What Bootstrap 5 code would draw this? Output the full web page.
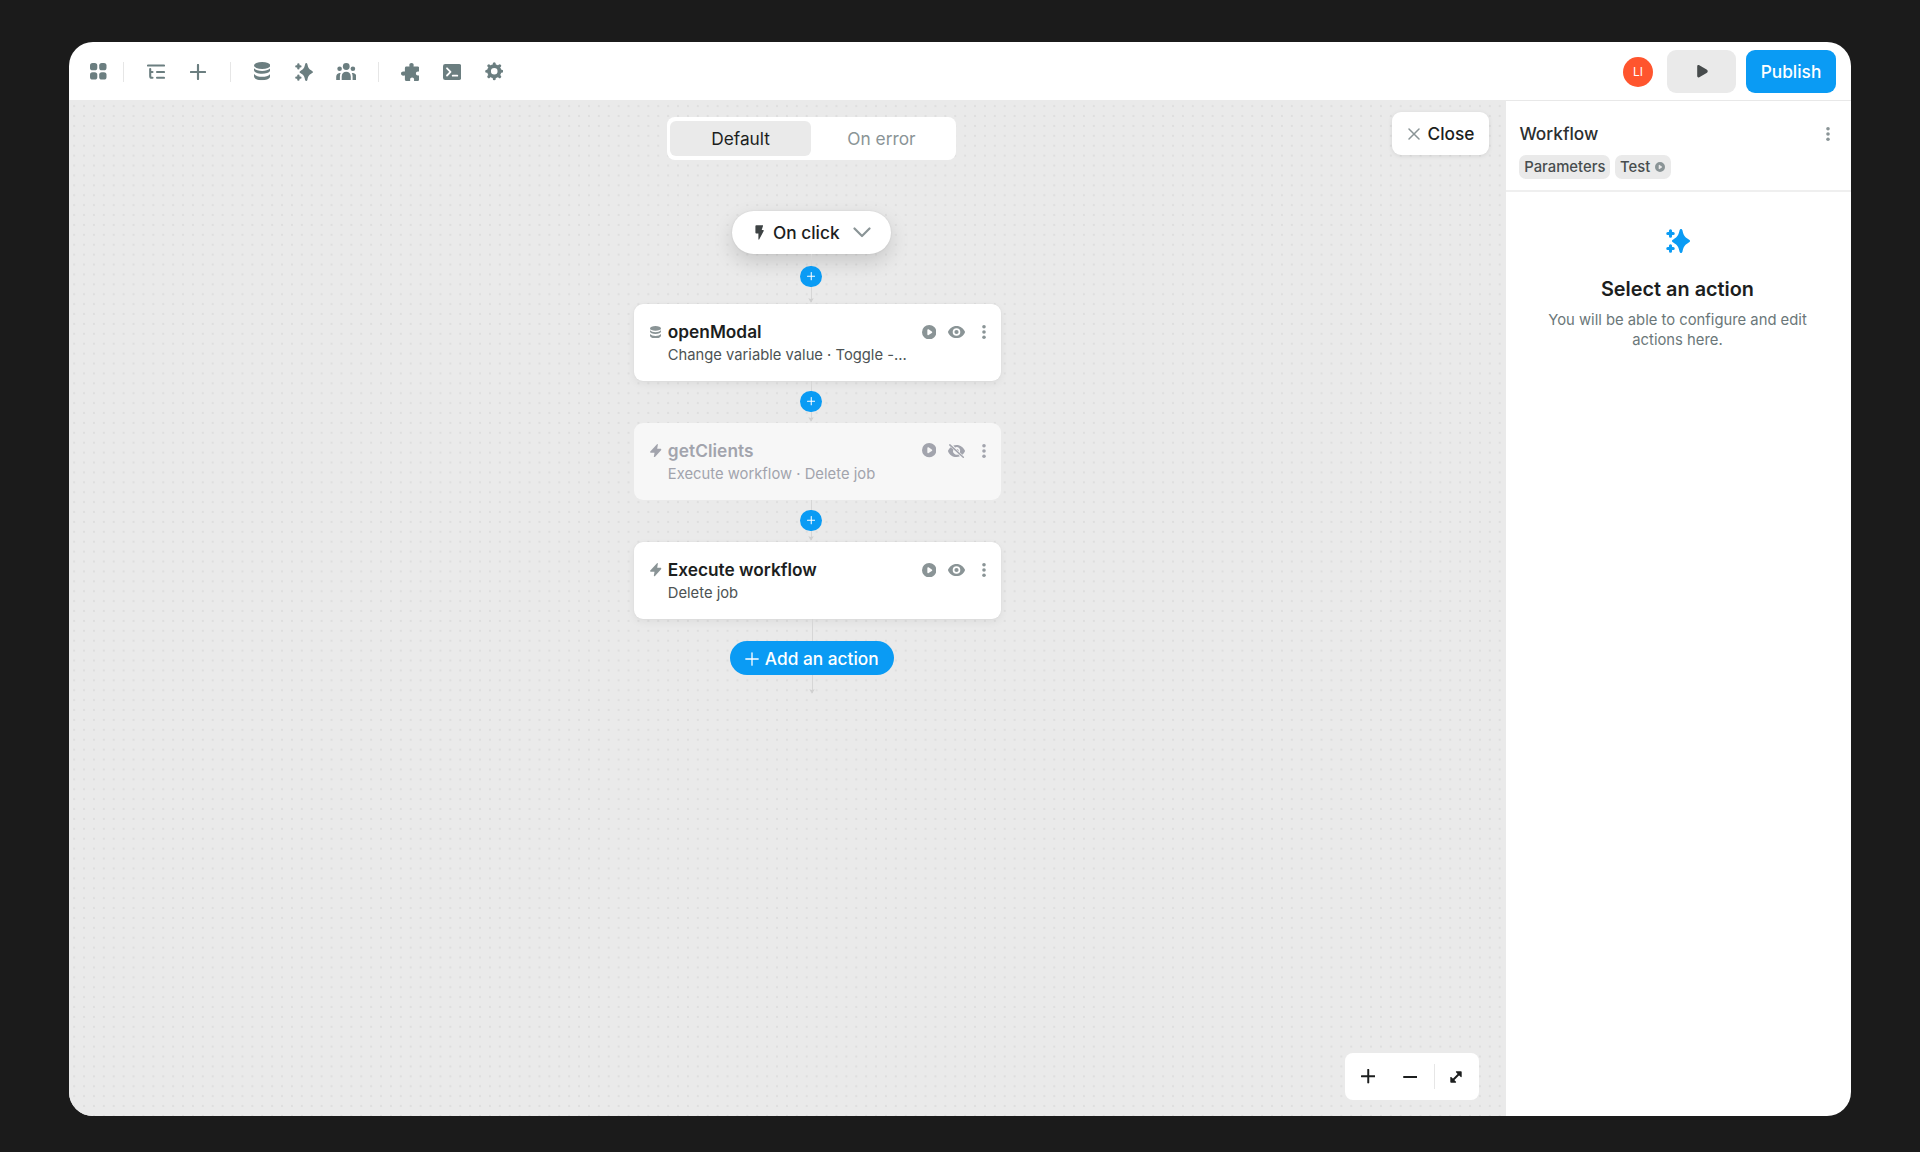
<!DOCTYPE html>
<html lang="en">
<head>
<meta charset="utf-8">
<meta name="viewport" content="width=device-width, initial-scale=1">
<title>Workflow editor</title>
<link href="https://cdn.jsdelivr.net/npm/bootstrap@5.3.0/dist/css/bootstrap.min.css" rel="stylesheet">
<style>
:root { --ink:#1c1e1e; --slate:#6b7e80; --grey:#8a9496; --blue:#0a9bf4; --canvas:#eaeaea; }
html, body { height:100%; }
body { background:#1b1b1b; font-family:Inter, "Liberation Sans", sans-serif; font-size:17.3px; font-weight:500; line-height:22px; color:var(--ink); padding:42px 69px 36px; overflow:hidden; }
svg { display:block; flex:none; fill:currentColor; }
.ln { fill:none; stroke:currentColor; stroke-linecap:round; stroke-linejoin:round; }
.app-window { height:1074px; border-radius:24px; background:#fff; }
.topbar { height:58px; padding:1px 15px 0 8.500px; color:var(--slate); }
.tool { width:42px; height:42px; border:0; background:none; padding:0; color:inherit; }
.sep { width:1px; height:20px; background:#e6e6e6; }
.sep-a { margin:0 10.700px 0 3.500px; }
.sep-b { margin:0 10.2px 0 11px; }
.avatar { width:30px; height:30px; background:#ff552e; color:#fff; font-size:12px; font-weight:400; margin-right:14px; }
.btn { --bs-btn-font-weight:500; --bs-btn-font-size:17.3px; --bs-btn-line-height:22px; --bs-btn-padding-x:0; --bs-btn-padding-y:0; --bs-btn-border-radius:9px; border:0; }
.btn-run { width:69px; height:42.5px; background:var(--canvas); color:#474b4c; margin-right:10px; padding-left:2px; }
.btn-publish { width:90px; height:42.5px; background:var(--blue); color:#fff; }
.workspace { width:1437px; background:var(--canvas); }
.grid-dots { position:absolute; inset:0; width:100%; height:100%; }
.flow { width:354px; margin-left:565px; padding-top:17.3px; }
.tabs { width:289px; height:42.4px; background:#fff; border-radius:8px; padding:3.6px; }
.tabs button { border:0; background:none; border-radius:6px; color:var(--grey); flex:1; padding:1px 0 0; }
.tabs button.active { background:var(--canvas); color:var(--ink); }
.trigger { width:159px; height:43px; margin-top:51.3px; border-radius:22px; background:#fff; box-shadow:0 0 2px rgba(0,0,0,.1), 0 8px 20px rgba(0,0,0,.15); padding:1px 20px 0 23px; }
.trigger-label { margin-left:9.500px; }
.link-line { width:1px; background:#d6d6d6; }
.joint { width:21.4px; height:21.4px; background:var(--blue); color:#fff; }
.tip { color:#d0d0d0; margin-top:-4px; }
.step { width:367px; height:77px; border-radius:9px; background:#fff; box-shadow:0 0 2px rgba(0,0,0,.06), 0 3px 8px rgba(0,0,0,.06); padding:17px 3.600px 0 16px; }
.step h2 { font-size:17.3px; font-weight:600; line-height:22px; margin:0; }
.step p { font-size:14.75px; font-weight:400; line-height:20px; margin:2.500px 0 0; color:#4d5354; white-space:pre; }
.step-icon { width:17.8px; height:22px; color:var(--grey); }
.step-act { width:27.3px; height:22px; color:var(--grey); }
.step.off { background:#f7f7f7; box-shadow:none; padding-top:16.500px; }
.step.off p { margin-top:2px; letter-spacing:.02px; }
.step.off h2 { letter-spacing:.07px; }
.step.off h2, .step.off p, .step.off .step-icon, .step.off .step-act { color:#a2a4ad; }
.add { width:164.5px; height:34.5px; border-radius:18px; background:var(--blue); color:#fff; margin-left:2px; gap:5.500px; padding-top:1px; }
.tail { margin-left:2px; }
.close-btn { position:absolute; right:17.5px; top:12.4px; width:96.5px; height:42.3px; background:#fff; color:var(--ink); box-shadow:0 1px 5px rgba(0,0,0,.09); gap:7.500px; padding-left:2px; }
.zoomer { position:absolute; right:27.3px; bottom:16px; width:133.5px; height:47px; background:#fff; border-radius:8px; padding:0 2px; }
.side { width:345px; border-top:1px solid #e8e8e8; }
.side-head { height:91px; padding:22px 13.400px 0; border-bottom:2px solid #efefef; }
.tag { height:24.4px; border-radius:7px; background:var(--canvas); font-size:14.85px; line-height:20px; color:#474d4e; padding:0 4.8px; }
.tag-run { margin-left:5px; gap:5px; padding-right:5.500px; }
.hint { padding:37px 2px 0 0; }
.hint h1 { font-size:19.85px; font-weight:600; line-height:26px; margin:23px 0 0; }
.hint p { font-size:14.8px; font-weight:400; line-height:20px; color:#6b7779; margin:8px 0 0; padding:0 36px; }
</style>
</head>
<body>
<svg width="0" height="0" class="position-absolute">
  <symbol id="i-db" viewBox="0 0 16 18"><ellipse cx="8" cy="3.4" rx="8" ry="3.4"/><path d="M0 6.2c1.6 1.9 4.6 2.7 8 2.7s6.400-.8 8-2.700v1.700c0 2.200-3.600 3.700-8 3.700s-8-1.500-8-3.700zM0 11.700c1.600 1.900 4.600 2.900 8 2.900s6.400-1 8-2.900v2.200C16 16.400 12.400 18 8 18s-8-1.600-8-4.100z"/></symbol>
  <symbol id="i-spark" viewBox="0 0 24 24"><path d="M15 0c.8 0 1.300.6 1.500 1.500.9 4.200 1.800 6.200 5.900 8.700 1 .6 1.600 1.100 1.600 1.800s-.6 1.200-1.600 1.800c-4.100 2.500-5 4.500-5.900 8.700-.2.900-.7 1.500-1.500 1.500s-1.300-.6-1.500-1.500c-.9-4.200-1.800-6.200-5.900-8.700C6.600 13.200 6 12.700 6 12s.6-1.200 1.600-1.800c4.100-2.500 5-4.500 5.900-8.700.2-.9.700-1.500 1.500-1.500z"/><path class="ln" stroke-width="3.100" d="M4.500 1.800v5.400M1.800 4.500h5.400M4.500 16.800v5.400M1.800 19.500h5.400"/></symbol>
  <symbol id="i-bolt" viewBox="0 0 12 14"><path d="M7.300.2C7.900-.2 8.300.200 8.200.8L7.500 5h3.700c.8 0 1 .7.600 1.200L5 13.700c-.5.500-1.100.200-1-.5L4.700 9H.9C.100 9-.2 8.300.300 7.800z"/></symbol>
  <symbol id="i-play" viewBox="0 0 14 14"><path fill-rule="evenodd" d="M7 0a7 7 0 1 1 0 14A7 7 0 0 1 7 0zM5.200 4.900v4.200c0 .8.600 1.100 1.200.700l3.100-2.100c.6-.4.600-1 0-1.400L6.400 4.200c-.6-.4-1.200-.1-1.200.7z"/></symbol>
  <symbol id="i-eye" viewBox="0 0 17 12"><path fill-rule="evenodd" d="M8.500 0C12.600 0 15.500 2.500 16.900 5.600c.1.300.1.500 0 .8C15.500 9.500 12.600 12 8.500 12S1.500 9.500.1 6.400c-.1-.3-.1-.5 0-.8C1.500 2.500 4.400 0 8.500 0zm0 2.200a3.800 3.800 0 1 0 0 7.600 3.800 3.800 0 0 0 0-7.600z"/><circle cx="8.500" cy="6" r="2.100"/></symbol>
  <symbol id="i-eyeoff" viewBox="0 0 17 14"><path d="M5.300 1.600C6.300 1.200 7.300 1 8.500 1c4.100 0 7 2.500 8.400 5.600.1.300.1.500 0 .8-.6 1.300-1.400 2.400-2.500 3.300L11.900 8.600a3.800 3.800 0 0 0-4.800-5.200zM2.700 3.200l2.600 2.200a3.800 3.800 0 0 0 4.900 5l1.700 1.900c-1 .4-2.100.7-3.400.7C4.400 13 1.500 10.500.1 7.400c-.1-.3-.1-.5 0-.8.6-1.300 1.500-2.500 2.600-3.400zM8.500 5a2.100 2.100 0 0 1 2.100 2.500z"/><path class="ln" stroke-width="1.500" d="M1.800.9l13.500 12.400"/></symbol>
  <symbol id="i-more" viewBox="0 0 4 14"><circle cx="2" cy="1.800" r="1.800"/><circle cx="2" cy="7" r="1.800"/><circle cx="2" cy="12.200" r="1.800"/></symbol>
  <symbol id="i-plus" viewBox="0 0 14 14"><path class="ln" d="M7 .8v12.400M.8 7h12.400"/></symbol>
  <symbol id="i-tip" viewBox="0 0 6 5"><path d="M.3.300 3 1l2.700-.7L3 4.800z"/></symbol>
</svg>

<div class="app-window d-flex flex-column overflow-hidden">
  <header class="topbar d-flex align-items-center">
    <button class="tool d-flex align-items-center justify-content-center"><svg width="16.500" height="16.500" viewBox="0 0 16.500 16.500"><rect width="7.300" height="7.300" rx="2.600"/><rect x="9.200" width="7.300" height="7.300" rx="2.600"/><rect y="9.200" width="7.300" height="7.300" rx="2.600"/><rect x="9.200" y="9.200" width="7.300" height="7.300" rx="2.600"/></svg></button>
    <span class="sep sep-a"></span>
    <button class="tool d-flex align-items-center justify-content-center"><svg width="18" height="16" viewBox="0 0 18 16"><path class="ln" stroke-width="2.100" d="M1 1.500h16M10 8h7M10 13.800h7M3.200 5v7.300c0 1 .5 1.500 1.500 1.500h.8M3.200 8h2.300"/></svg></button>
    <button class="tool d-flex align-items-center justify-content-center"><svg width="16" height="16" viewBox="0 0 14 14" stroke-width="1.900"><use href="#i-plus"/></svg></button>
    <span class="sep sep-b"></span>
    <button class="tool d-flex align-items-center justify-content-center"><svg width="16.300" height="18.300"><use href="#i-db"/></svg></button>
    <button class="tool d-flex align-items-center justify-content-center"><svg width="18" height="18"><use href="#i-spark"/></svg></button>
    <button class="tool d-flex align-items-center justify-content-center"><svg width="20.500" height="17" viewBox="0 0 20.500 17"><circle cx="10.250" cy="3.500" r="3.400"/><circle cx="3.600" cy="5.700" r="2.300"/><circle cx="16.900" cy="5.700" r="2.300"/><path d="M5.700 17v-3.500c0-2.800 1.900-4.700 4.550-4.700s4.550 1.900 4.550 4.700V17zM.2 17v-3.300c0-2 1.200-3.600 3.400-3.800.4 0 .8 0 1.100.2-.5 1-.8 2-.8 3.300V17zM20.300 17v-3.300c0-2-1.200-3.600-3.400-3.800-.4 0-.8 0-1.100.2.500 1 .8 2 .8 3.300V17z"/></svg></button>
    <span class="sep sep-b"></span>
    <button class="tool d-flex align-items-center justify-content-center"><svg width="18.500" height="18" viewBox="0 0 18.500 18"><path d="M10.500 0c1.300 0 2.200.9 2.200 2.100 0 .5-.2.900-.2 1.300h4.300c.9 0 1.500.6 1.500 1.500v3.600c-.5.200-.8 0-1.400 0-1.200 0-2 .9-2 2s.8 2 2 2c.6 0 .9-.2 1.400 0v3.900c0 .900-.6 1.500-1.500 1.500h-3.700c-.2-.5 0-.8 0-1.300 0-1.200-.8-2.100-2-2.100s-2 .9-2 2.100c0 .5.200.8 0 1.300H5.400c-.9 0-1.500-.6-1.500-1.500v-3.800c-.5 0-1 .1-1.600.1C.9 12.700 0 11.800 0 10.500s.9-2.100 2.300-2.100c.6 0 1.100.1 1.600.1V4.900c0-.9.600-1.500 1.500-1.500h3.100c0-.4-.2-.8-.2-1.300C8.300.9 9.200 0 10.500 0z"/></svg></button>
    <button class="tool d-flex align-items-center justify-content-center"><svg width="18.300" height="16" viewBox="0 0 18.300 16"><rect width="18.300" height="16" rx="2.200"/><path class="ln" style="stroke:#fff" stroke-width="1.800" d="M4 4.300 7.500 7.900 4 11.500M9.700 11.700h4.600"/></svg></button>
    <button class="tool d-flex align-items-center justify-content-center"><svg width="18.500" height="18.500" viewBox="-9.250 -9.250 18.500 18.500"><circle class="ln" r="5.200" stroke-width="3.800"/><path class="ln" stroke-width="3" d="M0-6.200v-1.400M0 6.200v1.400M-6.200 0h-1.400M6.200 0h1.400M-4.700-4.700l-.7-.7M4.700-4.700l.7-.7M-4.700 4.700l-.7.7M4.700 4.700l.7.7"/></svg></button>
    <span class="avatar rounded-circle d-flex align-items-center justify-content-center ms-auto">LI</span>
    <button class="btn btn-run d-flex align-items-center justify-content-center"><svg width="11" height="12.500" viewBox="0 0 11 12.500"><path d="M.2 1.500C.2.300 1.200-.2 2.300.3l7.300 4.300c1.500.9 1.500 2.400 0 3.300l-7.300 4.300c-1.100.5-2.100 0-2.100-1.200z"/></svg></button>
    <button class="btn btn-publish">Publish</button>
  </header>

  <div class="d-flex flex-grow-1">
    <main class="workspace position-relative">
      <svg class="grid-dots"><defs><pattern id="dots" width="9.9" height="9.9" x=".2" y="1.200" patternUnits="userSpaceOnUse"><circle cx="4.950" cy="4.950" r="1.150" fill="#dedede"/></pattern></defs><rect width="100%" height="100%" fill="url(#dots)"/></svg>

      <div class="flow position-relative d-flex flex-column align-items-center">
        <div class="tabs d-flex"><button class="active">Default</button><button>On error</button></div>

        <div class="trigger d-flex align-items-center">
          <svg width="9" height="15" viewBox="0 0 9 15" color="#3e4344"><path d="M1.300.3h6.200c.5 0 .7.400.5.800L6.700 5h1.400c.6 0 .8.500.6.900L4.300 14.300c-.3.600-.9.400-.9-.2V8.500H1.300c-.6 0-.9-.3-.9-.9V1.200c0-.600.300-.9.900-.9z"/></svg>
          <span class="trigger-label text-nowrap">On click</span>
          <svg class="ms-auto" width="18" height="11" viewBox="0 0 18 11" color="#8a9496"><path class="ln" stroke-width="2.200" d="M1.500 1.500 9 9l7.500-7.500"/></svg>
        </div>
        <div class="link-line" style="height:11.800px"></div>
        <div class="joint rounded-circle d-flex align-items-center justify-content-center"><svg width="8.500" height="8.500" stroke-width="1.700"><use href="#i-plus"/></svg></div>
        <div class="link-line" style="height:15.200px"></div><svg class="tip" width="6" height="5"><use href="#i-tip"/></svg>

        <section class="step d-flex align-self-start" style="margin-top:.600px">
          <span class="step-icon d-flex align-items-center"><svg width="11" height="12.500"><use href="#i-db"/></svg></span>
          <div class="flex-grow-1"><h2>openModal</h2><p>Change variable value · Toggle -...</p></div>
          <span class="step-act d-flex align-items-center justify-content-center"><svg width="14.400" height="14.400"><use href="#i-play"/></svg></span>
          <span class="step-act d-flex align-items-center justify-content-center"><svg width="17" height="12"><use href="#i-eye"/></svg></span>
          <span class="step-act d-flex align-items-center justify-content-center"><svg width="4" height="14"><use href="#i-more"/></svg></span>
        </section>
        <div class="link-line" style="height:10px"></div>
        <div class="joint rounded-circle d-flex align-items-center justify-content-center"><svg width="8.500" height="8.500" stroke-width="1.700"><use href="#i-plus"/></svg></div>
        <div class="link-line" style="height:9px"></div><svg class="tip" width="6" height="5"><use href="#i-tip"/></svg>

        <section class="step off d-flex align-self-start" style="margin-top:.800px">
          <span class="step-icon d-flex align-items-center"><svg width="11.500" height="13.500"><use href="#i-bolt"/></svg></span>
          <div class="flex-grow-1"><h2>getClients</h2><p>Execute workflow · Delete job</p></div>
          <span class="step-act d-flex align-items-center justify-content-center"><svg width="14.400" height="14.400"><use href="#i-play"/></svg></span>
          <span class="step-act d-flex align-items-center justify-content-center"><svg width="17" height="14"><use href="#i-eyeoff"/></svg></span>
          <span class="step-act d-flex align-items-center justify-content-center"><svg width="4" height="14"><use href="#i-more"/></svg></span>
        </section>
        <div class="link-line" style="height:9.800px"></div>
        <div class="joint rounded-circle d-flex align-items-center justify-content-center"><svg width="8.500" height="8.500" stroke-width="1.700"><use href="#i-plus"/></svg></div>
        <div class="link-line" style="height:9px"></div><svg class="tip" width="6" height="5"><use href="#i-tip"/></svg>

        <section class="step d-flex align-self-start" style="margin-top:.600px">
          <span class="step-icon d-flex align-items-center"><svg width="11.500" height="13.500"><use href="#i-bolt"/></svg></span>
          <div class="flex-grow-1"><h2>Execute workflow</h2><p>Delete job</p></div>
          <span class="step-act d-flex align-items-center justify-content-center"><svg width="14.400" height="14.400"><use href="#i-play"/></svg></span>
          <span class="step-act d-flex align-items-center justify-content-center"><svg width="17" height="12"><use href="#i-eye"/></svg></span>
          <span class="step-act d-flex align-items-center justify-content-center"><svg width="4" height="14"><use href="#i-more"/></svg></span>
        </section>
        <div class="link-line tail" style="height:22px"></div>
        <button class="btn add d-flex align-items-center justify-content-center"><svg width="14" height="14" stroke-width="1.300"><use href="#i-plus"/></svg>Add an action</button>
        <div class="link-line tail" style="height:17.500px"></div><svg class="tip tail" width="6" height="5"><use href="#i-tip"/></svg>
      </div>

      <button class="btn close-btn d-flex align-items-center justify-content-center"><svg width="12" height="12" viewBox="0 0 12 12" color="#8a9496"><path class="ln" stroke-width="1.500" d="M1 1l10 10M11 1 1 11"/></svg>Close</button>

      <div class="zoomer d-flex align-items-center">
        <button class="tool text-reset d-flex align-items-center justify-content-center"><svg width="14.500" height="14.500" stroke-width="1.900"><use href="#i-plus"/></svg></button>
        <button class="tool text-reset d-flex align-items-center justify-content-center"><svg width="14.500" height="4" viewBox="0 0 14.500 4"><path class="ln" stroke-width="2" d="M1 2h12.500"/></svg></button>
        <span class="sep ms-auto" style="height:25px"></span>
        <button class="tool text-reset d-flex align-items-center justify-content-center"><svg width="12" height="12" viewBox="0 0 12 12"><path d="M6.300.3h4.600c.6 0 .8.300.8.800v4.600c-.3.600-.8.500-1.200.1L6.200 1.500C5.700 1 5.800.5 6.300.3zM5.700 11.700H1.100c-.6 0-.8-.3-.8-.8V6.300c.3-.6.800-.5 1.200-.1l4.300 4.300c.5.500.4 1-.1 1.200z"/><path class="ln" stroke-width="2" d="M3 9l6-6"/></svg></button>
      </div>
    </main>

    <aside class="side">
      <div class="side-head">
        <div class="d-flex justify-content-between align-items-center"><span style="color:#2b2f30">Workflow</span><svg class="me-2" color="#8a9496" width="4" height="14"><use href="#i-more"/></svg></div>
        <div class="d-flex align-items-center" style="margin-top:9.700px">
          <span class="tag d-flex align-items-center">Parameters</span>
          <span class="tag tag-run d-flex align-items-center">Test<svg color="#8a9496" width="10" height="10"><use href="#i-play"/></svg></span>
        </div>
      </div>
      <div class="hint d-flex flex-column align-items-center text-center">
        <svg color="#0a9bf4" width="24" height="24"><use href="#i-spark"/></svg>
        <h1>Select an action</h1>
        <p>You will be able to configure and edit actions here.</p>
      </div>
    </aside>
  </div>
</div>
<script src="https://cdn.jsdelivr.net/npm/bootstrap@5.3.0/dist/js/bootstrap.bundle.min.js"></script>
</body>
</html>
